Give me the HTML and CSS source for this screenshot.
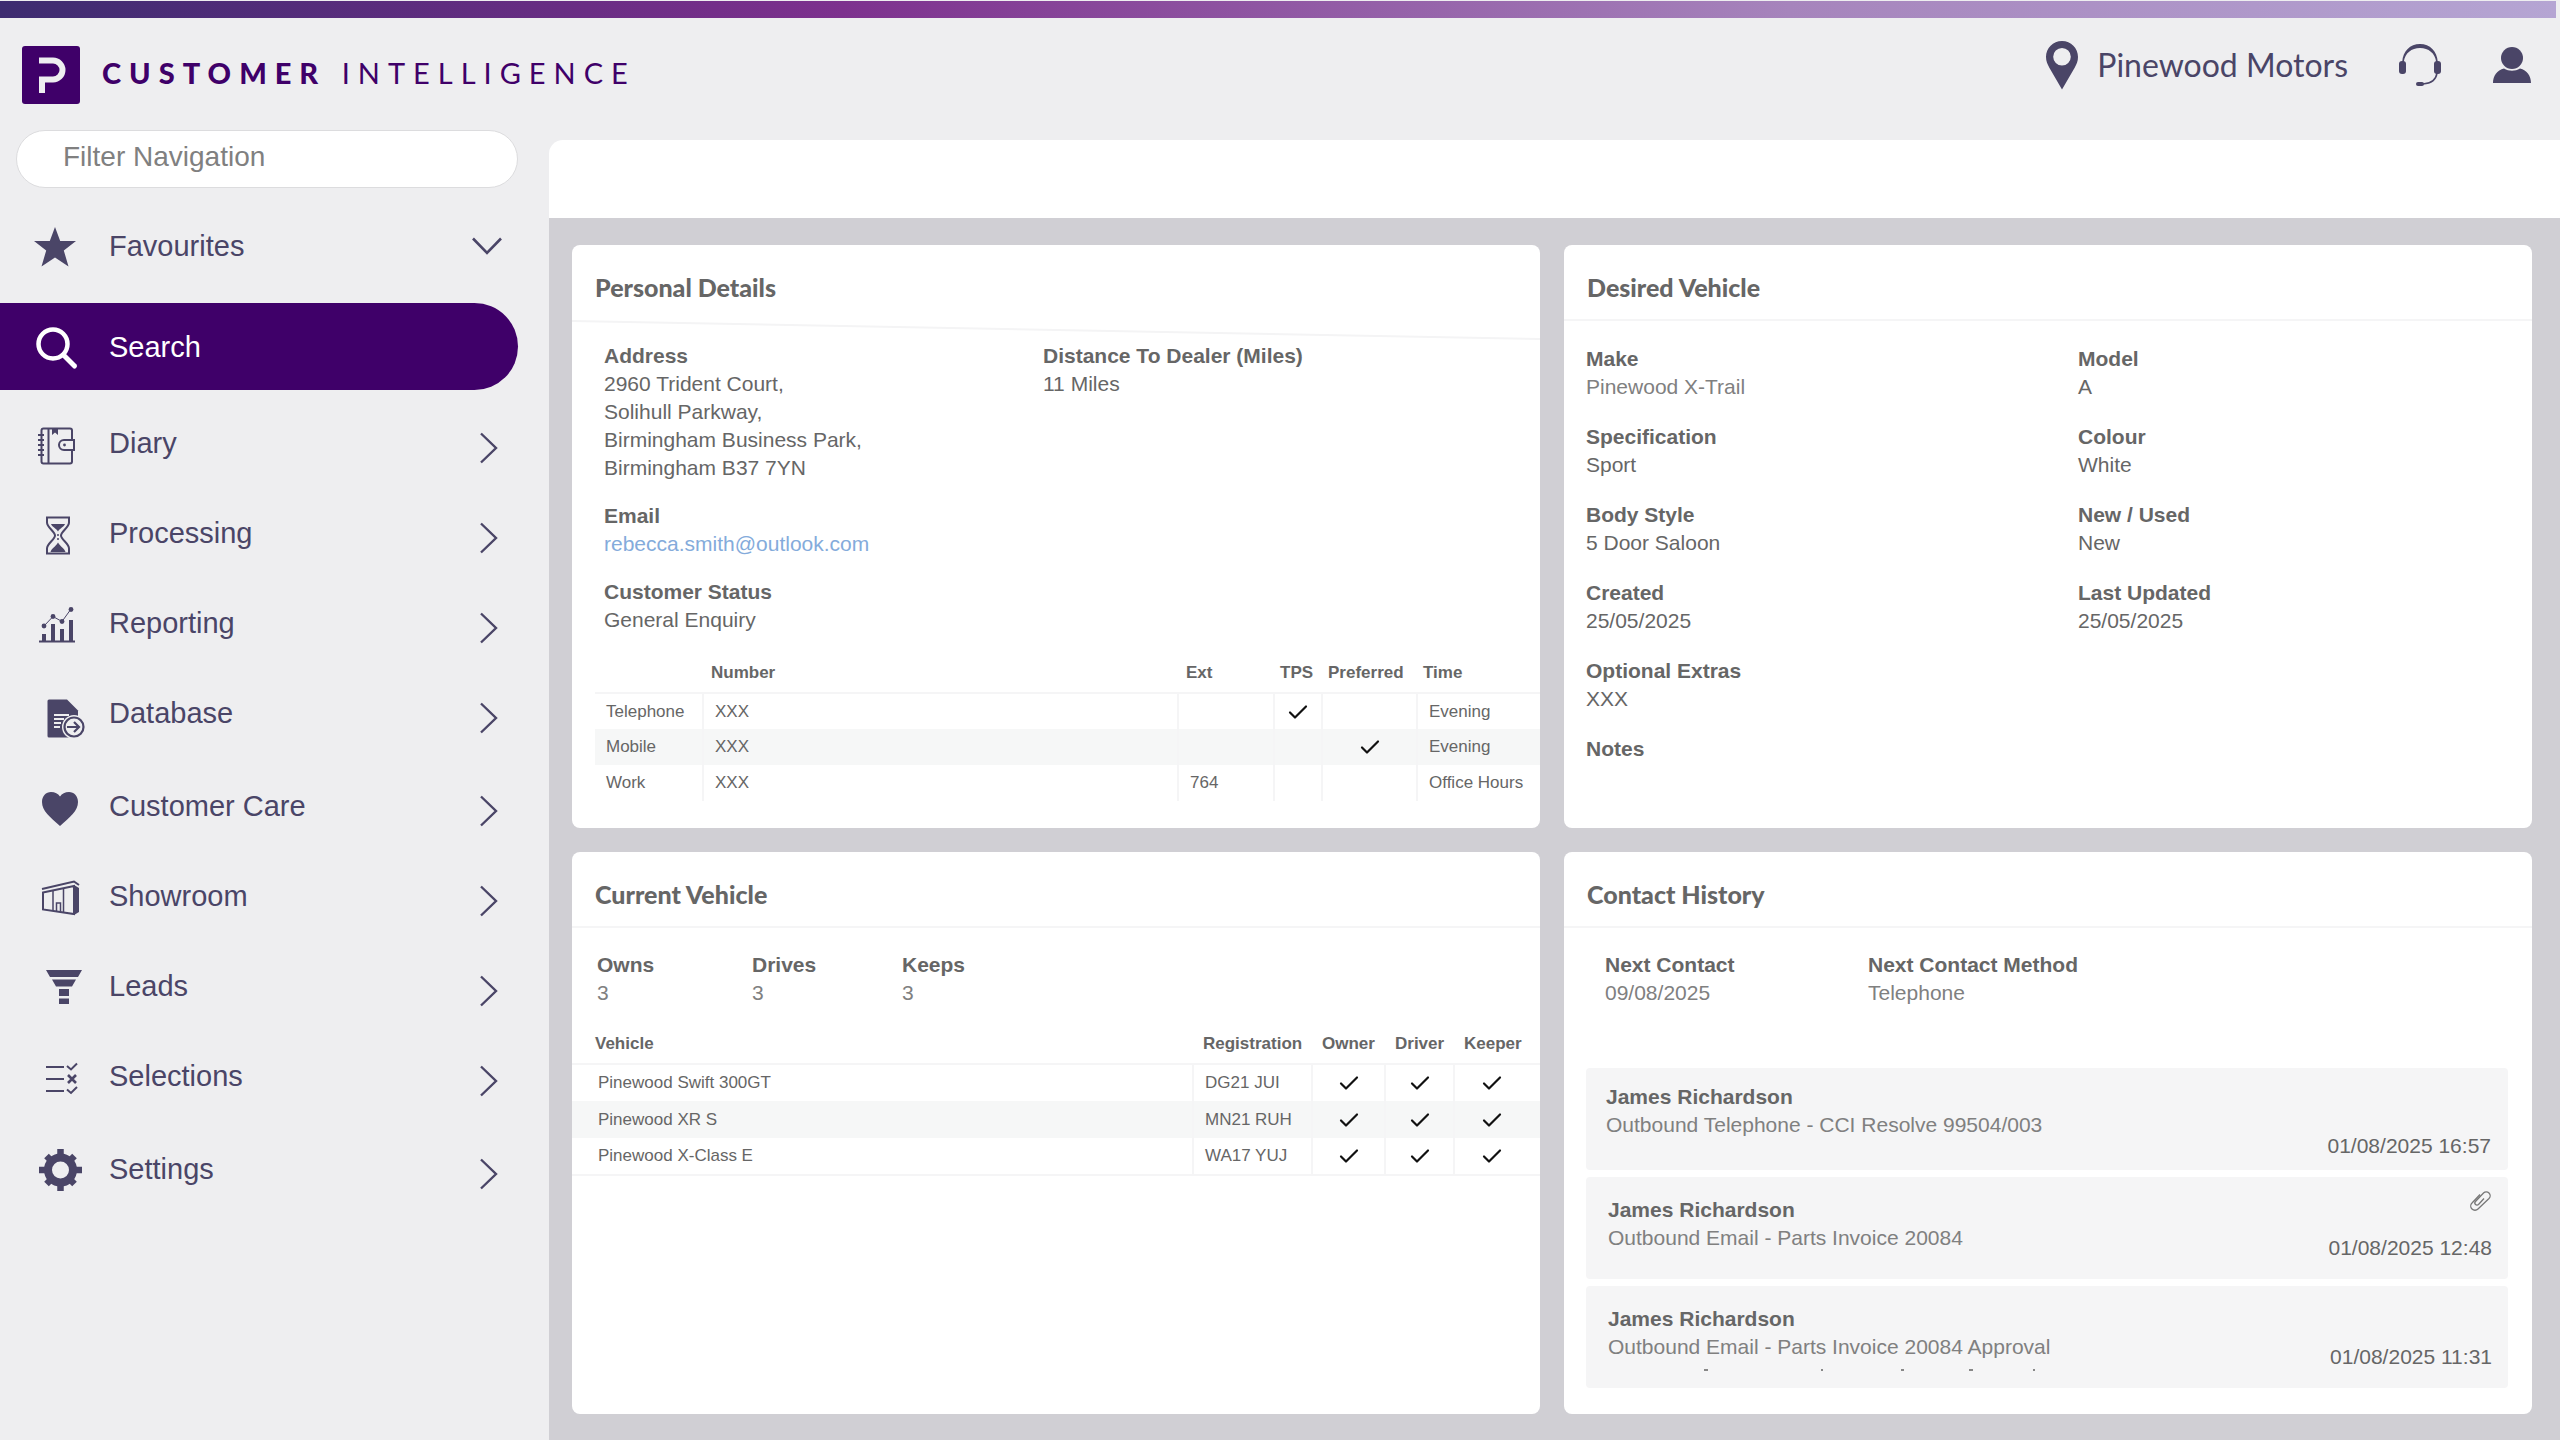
FILE: index.html
```html
<!DOCTYPE html>
<html lang="en">
<head>
<meta charset="utf-8">
<title>Customer Intelligence</title>
<meta name="viewport" content="width=device-width, initial-scale=1">
<link rel="stylesheet" href="styles.css">
</head>
<body>
<svg class="sprite" aria-hidden="true">
  <symbol id="chevron" viewBox="0 0 20 32"><path d="M2 1.500 17 16 2 30.500" fill="none" stroke="currentColor" stroke-width="2.400"/></symbol>
  <symbol id="tick" viewBox="0 0 20 16"><path d="M2 8.500 7 13.500 18 2.500" fill="none" stroke="currentColor" stroke-width="2.200" stroke-linecap="round" stroke-linejoin="round"/></symbol>
</svg>

<div class="app">
  <div class="strip"></div>
  <header class="header">
    <a class="brand" href="#">
      <svg class="brand-logo" viewBox="0 0 58 58" aria-hidden="true">
        <rect width="58" height="58" rx="3" fill="#3f0069"/>
        <path d="M17 14.500h14a9.500 9.500 0 0 1 0 19H20V47" fill="none" stroke="#eeeef0" stroke-width="6"/>
      </svg>
      <span class="brand-name"><strong>CUSTOMER</strong> INTELLIGENCE</span>
    </a>
    <div class="header-tools">
      <button class="site" type="button">
        <svg width="34" height="50" viewBox="0 0 34 50" aria-hidden="true"><path fill="currentColor" fill-rule="evenodd" d="M17 1C8 1 1 8 1 17c0 4 1.500 7.500 3.500 11L17 49.500 29.500 28C31.500 24.500 33 21 33 17 33 8 26 1 17 1Zm0 7a8.800 8.800 0 1 1 0 17.600A8.800 8.800 0 0 1 17 8Z"/></svg>
        Pinewood Motors
      </button>
      <button class="tool" type="button" aria-label="Support">
        <svg width="44" height="44" viewBox="0 0 44 44" aria-hidden="true">
          <path d="M4.200 19C5 8 12 1 22 1s17 7 17.800 18h-1.600C37 10 30.500 5 22 5S7 10 5.800 19Z" fill="currentColor"/>
          <rect x="1" y="18" width="7" height="13" rx="3" fill="currentColor"/><rect x="36" y="18" width="7" height="13" rx="3" fill="currentColor"/>
          <path d="M39 30c-1 7-5 10.500-14 11" fill="none" stroke="currentColor" stroke-width="1.600"/>
          <rect x="18" y="39" width="8" height="4" rx="2" fill="currentColor"/>
        </svg>
      </button>
      <button class="tool" type="button" aria-label="Account">
        <svg width="40" height="38" viewBox="0 0 40 38" aria-hidden="true"><circle cx="20" cy="12" r="11" fill="currentColor"/><path fill="currentColor" d="M1 37C1 30 5 24 12 22.500c5 3 11 3 16 0C35 24 39 30 39 37Z"/></svg>
      </button>
    </div>
  </header>

  <aside class="sidebar">
    <input class="filter" type="text" placeholder="Filter Navigation" aria-label="Filter Navigation">
    <nav class="nav">
      <a class="nav-item nav-favourites" href="#">
        <svg class="nav-icon" viewBox="0 -1 48 48"><path fill="currentColor" d="m19 4 5.200 14H40L27.800 27.500 32.500 43.500 19 34.500 5.500 43.500 10.200 27.500-2 18H13.800Z"/></svg>
        <span class="nav-label">Favourites</span>
        <svg class="nav-chevron chevron-down" viewBox="0 0 32 20"><path d="M2 2.500 16 17 30 2.500" fill="none" stroke="currentColor" stroke-width="2.600"/></svg>
      </a>
      <a class="nav-item nav-active" href="#" aria-current="page">
        <svg class="nav-icon" viewBox="0 0 48 48" fill="none" stroke="currentColor"><circle cx="17" cy="21" r="14.500" stroke-width="4.500"/><path d="m27.500 32 11 11" stroke-width="5" stroke-linecap="round"/></svg>
        <span class="nav-label">Search</span>
      </a>
      <div class="nav-group">
        <a class="nav-item" href="#">
          <svg class="nav-icon" viewBox="0 0 48 48" fill="none" stroke="currentColor" stroke-width="2"><path d="M36 17V8.500a2 2 0 0 0-2-2H7.500a2 2 0 0 0-2 2v31a2 2 0 0 0 2 2H34a2 2 0 0 0 2-2V28M12.500 7v34M38 18H28a5 5 0 0 0 0 10h10ZM2 13h6M2 18h6M2 23h6M2 28h6M2 33h6"/><path d="M16 7h6v6l-3-2.500-3 2.500Z" fill="currentColor" stroke="none"/><circle cx="28.500" cy="23" r="1.400" fill="currentColor" stroke="none"/></svg>
          <span class="nav-label">Diary</span>
          <svg class="nav-chevron"><use href="#chevron"/></svg>
        </a>
        <a class="nav-item" href="#">
          <svg class="nav-icon" viewBox="0 0 48 48"><path d="M11 5.500h22v5c0 5-8 9-8 13s8 8 8 13v5H11v-5c0-5 8-9 8-13s-8-8-8-13Z" fill="none" stroke="currentColor" stroke-width="2"/><path fill="currentColor" d="M15 12h14c-1 3-5 4-7 7.500C20 16 16 15 15 12Zm-.5 28c1-4 5-5 7.500-9.500C24.500 35 28.500 36 29.500 40Z"/><circle cx="22" cy="23" r="1" fill="currentColor"/><circle cx="22" cy="27" r="1" fill="currentColor"/></svg>
          <span class="nav-label">Processing</span>
          <svg class="nav-chevron"><use href="#chevron"/></svg>
        </a>
        <a class="nav-item" href="#">
          <svg class="nav-icon" viewBox="0 0 48 48" fill="currentColor"><path d="M3 38.500h36v2H3ZM6 32h4v7H6ZM15 22h4v17h-4ZM24 27h4v12h-4ZM33 18h4v21h-4Z"/><path d="m8 24 9-9.500 9 5L35 7" fill="none" stroke="currentColor"/><circle cx="8" cy="24" r="2.400"/><circle cx="17" cy="14.500" r="2.400"/><circle cx="26" cy="19.500" r="2.400"/><circle cx="35" cy="7.500" r="2.400"/></svg>
          <span class="nav-label">Reporting</span>
          <svg class="nav-chevron"><use href="#chevron"/></svg>
        </a>
        <a class="nav-item" href="#">
          <svg class="nav-icon" viewBox="0 0 48 48"><path d="M13 7.500h18l11 11v5l-6 22H13a1.500 1.500 0 0 1-1.500-1.500V9A1.500 1.500 0 0 1 13 7.500Z" fill="currentColor"/><path d="M18 23h15M18 27h10M18 31h7M18 35h6" stroke="#eeeef0" stroke-width="2"/><circle cx="38" cy="35" r="12" fill="#eeeef0"/><circle cx="38" cy="35" r="9.500" fill="none" stroke="currentColor" stroke-width="2.200"/><path d="M31 35h12m-5-5 5 5-5 5" fill="none" stroke="currentColor" stroke-width="2.200"/></svg>
          <span class="nav-label">Database</span>
          <svg class="nav-chevron"><use href="#chevron"/></svg>
        </a>
      </div>
      <div class="nav-group">
        <a class="nav-item" href="#">
          <svg class="nav-icon" viewBox="0 0 48 48"><path fill="currentColor" d="M24 41C14 32 6 26 6 17 6 11 10 7 15 7c4 0 7 1.500 9 4.500C26 8.500 29 7 33 7c5 0 9 4 9 10 0 9-8 15-18 24Z"/></svg>
          <span class="nav-label">Customer Care</span>
          <svg class="nav-chevron"><use href="#chevron"/></svg>
        </a>
        <a class="nav-item" href="#">
          <svg class="nav-icon" viewBox="0 2 48 48" fill="none" stroke="currentColor" stroke-width="2"><path d="M6 16 38 8.500l5 3.500M7 19.500 38 13v28L7 36.500Z"/><path d="M17 18v20M27.500 16v23.500M20.500 38v-8h4v8.500" stroke-width="1.500"/><path d="m38 12 5 3v24l-5 3Z" fill="currentColor" stroke="none"/></svg>
          <span class="nav-label">Showroom</span>
          <svg class="nav-chevron"><use href="#chevron"/></svg>
        </a>
        <a class="nav-item" href="#">
          <svg class="nav-icon" viewBox="0 1 48 48"><path fill="currentColor" d="M10 6h36l-4 7H14ZM16 15.500h24l-4 7H20ZM23 25h10v7H23ZM23 34.500h10V40H23Z"/></svg>
          <span class="nav-label">Leads</span>
          <svg class="nav-chevron"><use href="#chevron"/></svg>
        </a>
        <a class="nav-item" href="#">
          <svg class="nav-icon" viewBox="0 0 48 48" fill="none" stroke="currentColor" stroke-width="2"><path d="M10 12h18M10 24h18M10 36h18M31 11l4 3.500 6-6M31 34.500l4 3.500 6-6"/><path d="m32 20 8 8m0-8-8 8" stroke-width="2.600"/></svg>
          <span class="nav-label">Selections</span>
          <svg class="nav-chevron"><use href="#chevron"/></svg>
        </a>
      </div>
      <div class="nav-group">
        <a class="nav-item" href="#">
          <svg class="nav-icon" viewBox="0 2 48 48"><circle cx="24.500" cy="24" r="12.500" fill="none" stroke="currentColor" stroke-width="8"/><path stroke="currentColor" stroke-width="6.500" stroke-linejoin="round" d="M24.500 3v6M24.500 39v6M3 24h6M40 24h6M10.500 10l4 4M34.500 34l4 4M38.500 10l-4 4M14.500 34l-4 4"/></svg>
          <span class="nav-label">Settings</span>
          <svg class="nav-chevron"><use href="#chevron"/></svg>
        </a>
      </div>
    </nav>
  </aside>

  <main class="main">
    <div class="toolbar"></div>
    <div class="cards">
      <section class="card">
        <h2 class="card-title card-title-plain">Personal Details</h2>
        <svg class="slant" viewBox="0 0 968 20" preserveAspectRatio="none" aria-hidden="true"><path d="M0 1 968 19" stroke="#f4f4f5" stroke-width="2"/></svg>
        <div class="personal">
          <dl class="fields">
            <div><dt>Address</dt><dd>2960 Trident Court,<br>Solihull Parkway,<br>Birmingham Business Park,<br>Birmingham B37 7YN</dd></div>
            <div><dt>Email</dt><dd><a class="mail" href="mailto:rebecca.smith@outlook.com">rebecca.smith@outlook.com</a></dd></div>
            <div><dt>Customer Status</dt><dd>General Enquiry</dd></div>
          </dl>
          <dl class="fields">
            <div><dt>Distance To Dealer (Miles)</dt><dd>11 Miles</dd></div>
          </dl>
        </div>
        <table class="grid phones">
          <colgroup><col class="w-kind"><col><col class="w-ext"><col class="w-tps"><col class="w-pref"><col class="w-time"></colgroup>
          <thead><tr><td></td><th scope="col">Number</th><th scope="col">Ext</th><th scope="col">TPS</th><th scope="col">Preferred</th><th scope="col">Time</th></tr></thead>
          <tbody>
            <tr><td>Telephone</td><td>XXX</td><td></td><td class="mark"><svg class="tick" role="img" aria-label="Yes"><use href="#tick"/></svg></td><td></td><td>Evening</td></tr>
            <tr><td>Mobile</td><td>XXX</td><td></td><td></td><td class="mark"><svg class="tick" role="img" aria-label="Yes"><use href="#tick"/></svg></td><td>Evening</td></tr>
            <tr><td>Work</td><td>XXX</td><td>764</td><td></td><td></td><td>Office Hours</td></tr>
          </tbody>
        </table>
      </section>

      <section class="card">
        <h2 class="card-title">Desired Vehicle</h2>
        <dl class="desired">
          <div><dt>Make</dt><dd class="soft">Pinewood X-Trail</dd></div>
          <div><dt>Model</dt><dd>A</dd></div>
          <div><dt>Specification</dt><dd>Sport</dd></div>
          <div><dt>Colour</dt><dd>White</dd></div>
          <div><dt>Body Style</dt><dd>5 Door Saloon</dd></div>
          <div><dt>New / Used</dt><dd>New</dd></div>
          <div><dt>Created</dt><dd>25/05/2025</dd></div>
          <div><dt>Last Updated</dt><dd>25/05/2025</dd></div>
          <div class="wide"><dt>Optional Extras</dt><dd>XXX</dd></div>
          <div class="wide"><dt>Notes</dt></div>
        </dl>
      </section>

      <section class="card">
        <h2 class="card-title">Current Vehicle</h2>
        <dl class="counts">
          <div><dt>Owns</dt><dd class="soft">3</dd></div>
          <div><dt>Drives</dt><dd class="soft">3</dd></div>
          <div><dt>Keeps</dt><dd class="soft">3</dd></div>
        </dl>
        <table class="grid vehicles">
          <colgroup><col><col class="w-reg"><col class="w-owner"><col class="w-driver"><col class="w-keeper"></colgroup>
          <thead><tr><th scope="col">Vehicle</th><th scope="col">Registration</th><th scope="col">Owner</th><th scope="col">Driver</th><th scope="col">Keeper</th></tr></thead>
          <tbody>
            <tr><td>Pinewood Swift 300GT</td><td>DG21 JUI</td><td class="mark"><svg class="tick" role="img" aria-label="Yes"><use href="#tick"/></svg></td><td class="mark"><svg class="tick" role="img" aria-label="Yes"><use href="#tick"/></svg></td><td class="mark"><svg class="tick" role="img" aria-label="Yes"><use href="#tick"/></svg></td></tr>
            <tr><td>Pinewood XR S</td><td>MN21 RUH</td><td class="mark"><svg class="tick" role="img" aria-label="Yes"><use href="#tick"/></svg></td><td class="mark"><svg class="tick" role="img" aria-label="Yes"><use href="#tick"/></svg></td><td class="mark"><svg class="tick" role="img" aria-label="Yes"><use href="#tick"/></svg></td></tr>
            <tr><td>Pinewood X-Class E</td><td>WA17 YUJ</td><td class="mark"><svg class="tick" role="img" aria-label="Yes"><use href="#tick"/></svg></td><td class="mark"><svg class="tick" role="img" aria-label="Yes"><use href="#tick"/></svg></td><td class="mark"><svg class="tick" role="img" aria-label="Yes"><use href="#tick"/></svg></td></tr>
          </tbody>
        </table>
      </section>

      <section class="card">
        <h2 class="card-title">Contact History</h2>
        <dl class="next">
          <div><dt>Next Contact</dt><dd class="soft">09/08/2025</dd></div>
          <div><dt>Next Contact Method</dt><dd class="soft">Telephone</dd></div>
        </dl>
        <ul class="history">
          <li class="entry">
            <div class="entry-text"><strong>James Richardson</strong><span class="soft">Outbound Telephone - CCI Resolve 99504/003</span></div>
            <div class="entry-side"><time>01/08/2025 16:57</time></div>
          </li>
          <li class="entry">
            <div class="entry-text"><strong>James Richardson</strong><span class="soft">Outbound Email - Parts Invoice 20084</span></div>
            <div class="entry-side">
              <svg class="clip" viewBox="0 0 24 24" role="img" aria-label="Attachment"><path d="M12 5.500 4 14a4 4 0 0 0 6 6L21 9.500a3.800 3.800 0 0 0-5.500-5.500L7.500 12.500a2 2 0 0 0 3 3L16 9.500" fill="none" stroke="currentColor" stroke-width="1.300"/></svg>
              <time>01/08/2025 12:48</time>
            </div>
          </li>
          <li class="entry">
            <div class="entry-text"><strong>James Richardson</strong><span class="soft">Outbound Email - Parts Invoice 20084 Approval</span>
              <svg class="cutoff" viewBox="0 0 440 2" aria-hidden="true"><path d="M96 1h4M213 1h2M293 1h3M361 1h4M425 1h2" stroke="#888" stroke-width="2"/></svg></div>
            <div class="entry-side"><time>01/08/2025 11:31</time></div>
          </li>
        </ul>
      </section>
    </div>
  </main>
</div>
</body>
</html>
```
FILE: styles.css
```css
:root {
  --page: #eeeef0;
  --canvas: #d0cfd4;
  --purple: #3f0069;
  --slate: #4a4567;
  --text: #666;
  --soft: #808080;
  --rule: #f5f5f6;
  --display: Lato, "Open Sans", sans-serif;
}

* { box-sizing: border-box; }

body {
  margin: 0;
  background: var(--page);
  color: var(--text);
  font: 21px/28px "Liberation Sans", Arial, sans-serif;
}

button {
  padding: 0;
  border: 0;
  background: none;
  color: inherit;
  font: inherit;
}

a { color: inherit; text-decoration: none; }
dl, dd, ul, h2 { margin: 0; padding: 0; }
dt { font-weight: 700; }
ul { list-style: none; }
svg { display: block; }
.sprite { position: absolute; width: 0; height: 0; }
.soft { color: var(--soft); }

.app {
  display: grid;
  grid-template-columns: 549px 1fr;
  grid-template-rows: 18px 112px auto;
  min-height: 100vh;
}

.strip {
  grid-column: 1 / -1;
  margin: 1px 4px 0 0;
  background: linear-gradient(90deg, #3d2c70 0%, #6a2d84 23%, #7d318e 33%, #a684bc 70%, #b5a5d3 100%);
}

.header {
  grid-column: 1 / -1;
  display: flex;
  justify-content: space-between;
  color: var(--slate);
}

.brand {
  display: flex;
  align-items: center;
  gap: 22px;
  height: 58px;
  margin: 28px 0 0 22px;
  color: var(--purple);
}

.brand-logo { width: 58px; height: 58px; }

.brand-name {
  padding-bottom: 4px;
  font: 400 29px/36px var(--display);
  letter-spacing: 8px;
}

.brand-name strong { font-weight: 900; }

.header-tools {
  display: flex;
  align-items: center;
  gap: 50px;
  height: 50px;
  margin: 22px 28px 0 0;
}

.site {
  display: flex;
  align-items: center;
  gap: 18px;
  font: 400 32px/40px var(--display);
}

.sidebar { padding-left: 16px; }

.filter {
  display: block;
  width: 502px;
  height: 58px;
  padding: 0 46px 4px;
  border: 1px solid #dcdcde;
  border-radius: 29px;
  background: #fff;
  color: #808080;
  font: 28px/36px "Liberation Sans", Arial, sans-serif;
}

.filter::placeholder { color: #808080; opacity: 1; }

.nav {
  display: flex;
  flex-direction: column;
  margin-left: -16px;
  color: var(--slate);
  font-size: 29px;
}

.nav-item {
  display: flex;
  align-items: center;
  height: 90px;
  padding: 0 50px 0 36px;
}

.nav-icon {
  flex: none;
  width: 48px;
  height: 48px;
  margin-right: 25px;
  overflow: visible;
}

.nav-label { flex: 1; padding-bottom: 6px; }
.nav-chevron { width: 20px; height: 32px; margin: 4px 0 0; }
.nav-item .chevron-down { width: 32px; height: 20px; margin: 0; }

.nav-favourites { height: 115px; padding-right: 46px; }
.nav-favourites .nav-label, .nav-active .nav-label { padding-bottom: 0; }

.nav-active {
  width: 518px;
  height: 87px;
  margin-bottom: 11px;
  border-radius: 0 44px 44px 0;
  background: var(--purple);
  color: #fff;
}

.nav-group + .nav-group { margin-top: 3px; }

.main {
  display: flex;
  flex-direction: column;
  margin-top: 10px;
}

.toolbar {
  height: 78px;
  border-radius: 14px 0 0 0;
  background: #fff;
}

.cards {
  flex: 1;
  display: grid;
  grid-template-columns: 1fr 1fr;
  grid-template-rows: 583px 1fr;
  gap: 24px;
  padding: 27px 28px 27px 23px;
  background: var(--canvas);
}

.card {
  display: flex;
  flex-direction: column;
  min-width: 0;
  border-radius: 8px;
  background: #fff;
}

.card-title {
  height: 76px;
  padding: 24px 23px 0;
  border-bottom: 2px solid var(--rule);
  font: 900 25px/36px var(--display);
}

.card-title-plain { height: 75px; border-bottom: 0; }

.slant { width: 100%; height: 20px; }

.personal {
  display: grid;
  grid-template-columns: 439px 1fr;
  margin: 2px 0 20px 32px;
}

.fields { display: flex; flex-direction: column; gap: 20px; }
.mail { color: #84abdb; }

.desired {
  display: grid;
  grid-template-columns: 41fr 36fr;
  gap: 22px 0;
  padding: 24px 22px;
}

.desired .wide { grid-column: 1 / -1; }

.grid {
  border-collapse: collapse;
  table-layout: fixed;
  font-size: 17px;
  line-height: 20px;
}

.grid thead tr { height: 39px; border-bottom: 2px solid var(--rule); }
.grid tbody tr { height: 36px; }
.grid tbody tr:nth-child(even) { background: #f6f7f7; }
.grid th { padding: 0 0 0 8px; text-align: left; }
.grid td { padding: 0 0 0 11px; }
.grid tbody td + td { border-left: 2px solid var(--rule); }
.grid .mark { padding: 0; }
.tick { width: 20px; height: 16px; margin: 0 auto; color: #111; }

.phones { margin-left: 23px; }
.w-kind { width: 108px; }
.w-ext { width: 96px; }
.w-tps { width: 48px; }
.w-pref { width: 95px; }
.w-time { width: 123px; }
.phones th:nth-child(n+4) { padding-left: 6px; }

.counts {
  display: grid;
  grid-template-columns: 155px 150px 1fr;
  padding: 23px 25px 18px;
}

.vehicles tbody tr { height: 37px; }
.vehicles tbody tr:last-child { border-bottom: 2px solid var(--rule); }
.vehicles th { padding-left: 10px; }
.vehicles th:first-child { padding-left: 23px; }
.vehicles td:first-child { padding-left: 26px; }
.w-reg { width: 119px; }
.w-owner { width: 73px; }
.w-driver { width: 69px; }
.w-keeper { width: 86px; }
.vehicles .mark:last-child { padding-right: 12px; }

.next {
  display: grid;
  grid-template-columns: 263px 1fr;
  padding: 23px 41px 61px;
}

.history {
  display: flex;
  flex-direction: column;
  gap: 7px;
  margin: 0 24px 26px 22px;
}

.entry {
  display: flex;
  justify-content: space-between;
  height: 102px;
  padding: 12px 17px 10px 20px;
  border-radius: 4px;
  background: #f5f5f6;
}

.entry + .entry { padding: 12px 16px 17px 22px; }

.entry-text { display: flex; flex-direction: column; padding-top: 3px; }
.entry + .entry .entry-text { padding-top: 7px; }
.cutoff { width: 440px; height: 2px; margin-top: 8px; }

.entry-side {
  display: flex;
  flex-direction: column;
  align-items: flex-end;
  justify-content: flex-end;
}

.clip { width: 24px; height: 24px; margin-bottom: auto; color: #777; }
```
